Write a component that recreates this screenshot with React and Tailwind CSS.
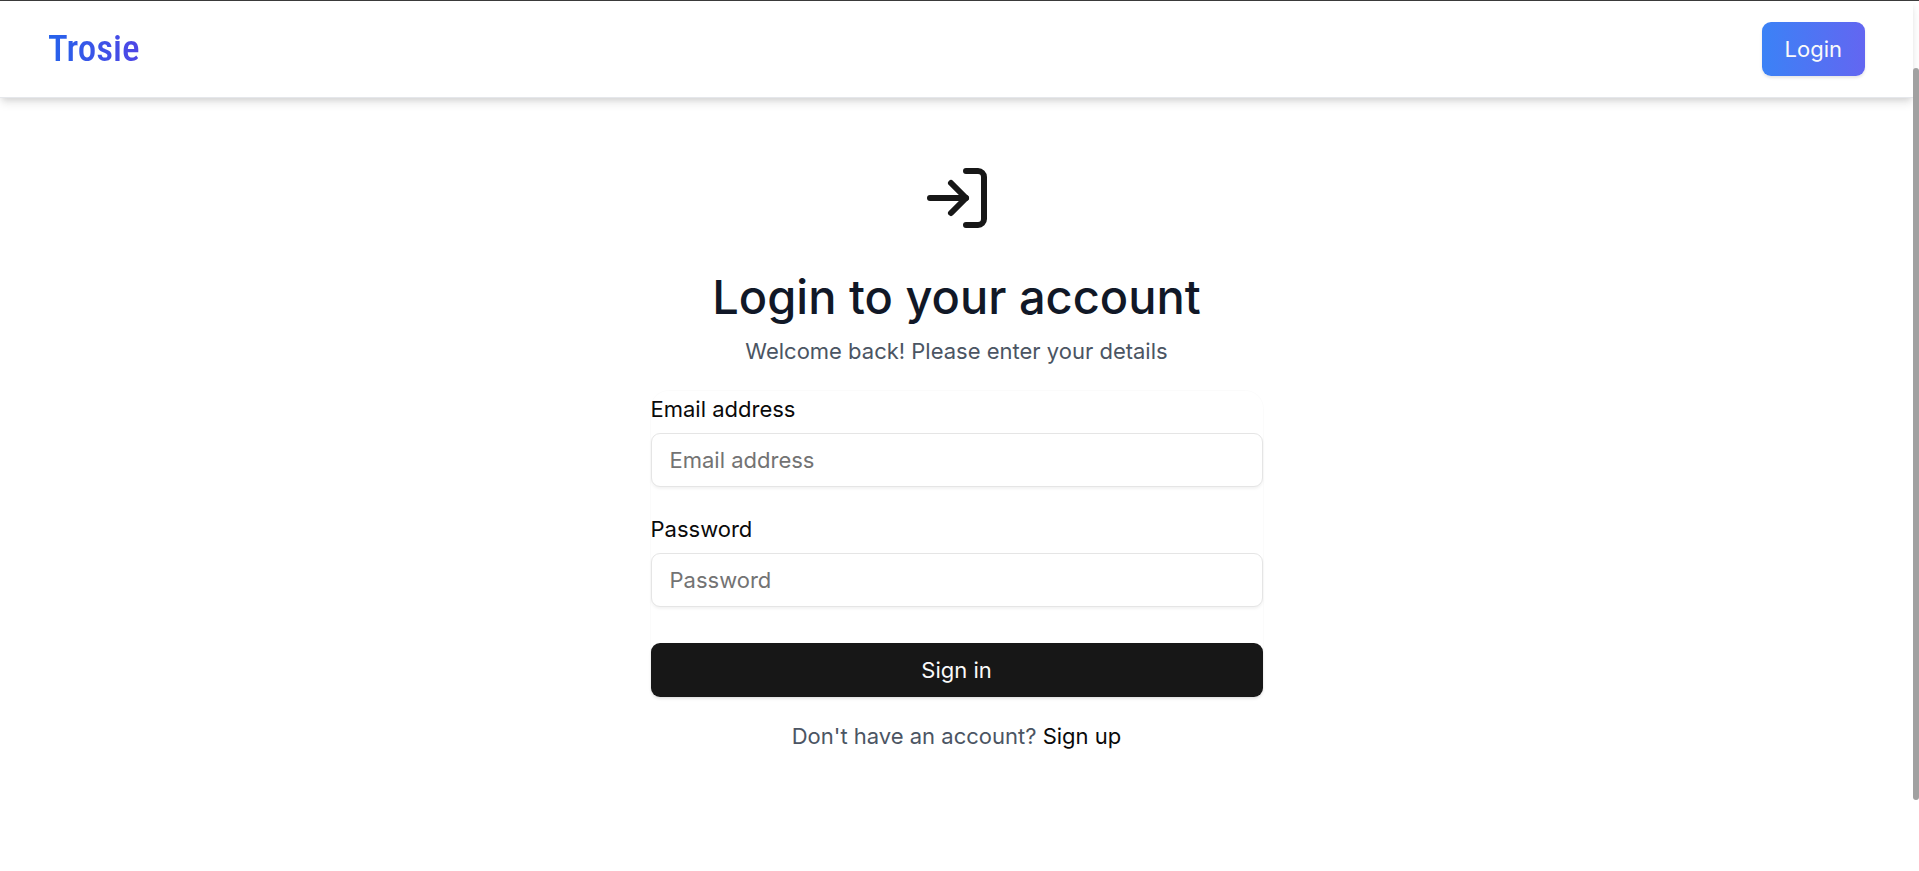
import { LogIn } from "lucide-react";

function Field({ id, label, type }) {
  return (
    <div className="flex flex-col gap-[10px]">
      <label htmlFor={id} className="text-[22px] leading-7 text-neutral-950">
        {label}
      </label>
      <input
        id={id}
        name={id}
        type={type}
        placeholder={label}
        className="h-[54px] w-full rounded-[9px] border border-[#e5e5e5] bg-white px-[18px] text-[22px] text-neutral-950 shadow-[0_2px_3px_rgba(0,0,0,0.05)] placeholder:text-[#737373]"
      />
    </div>
  );
}

function Header() {
  return (
    <header className="flex items-center justify-between border-b border-[#e5e7eb] bg-white px-12 py-[21px] shadow-[0_6px_9px_-1px_rgba(0,0,0,0.1),0_3px_6px_-2px_rgba(0,0,0,0.1)]">
      <a
        href="#home"
        className="bg-linear-[to_right,#2563eb,#4f46e5] bg-clip-text font-['Roboto_Condensed','Liberation_Sans_Narrow','Liberation_Sans',sans-serif] text-[37px] font-medium leading-[54px] text-transparent"
      >
        Trosie
      </a>
      <button
        type="button"
        className="h-[54px] rounded-[9px] bg-linear-[to_right,#3b82f6,#6366f1] px-[23px] text-[22px] text-neutral-50 shadow-[0_2px_3px_rgba(0,0,0,0.1)]"
      >
        Login
      </button>
    </header>
  );
}

export default function App() {
  return (
    <div className="flex min-h-screen border-t border-[#3c3c3c] bg-white font-['Inter',sans-serif] font-normal">
      <div className="flex min-w-0 flex-1 flex-col">
        <Header />
        <main className="mx-auto flex w-full max-w-[612px] flex-col items-center pt-16">
          <LogIn className="size-[72px] text-neutral-900" strokeWidth={2} aria-hidden="true" />
          <h1 className="mt-9 text-[47px] font-medium leading-[54px] text-[#111827]">
            Login to your account
          </h1>
          <p className="mt-[11px] text-[22px] leading-8 text-[#4b5563]">
            Welcome back! Please enter your details
          </p>
          <form className="mt-6 flex w-full flex-col gap-7 rounded-t-[18px] rounded-b-[9px] pt-1 shadow-[0_0_0_1px_rgba(0,0,0,0.015)]">
            <Field id="email" label="Email address" type="email" />
            <Field id="password" label="Password" type="password" />
            <button
              type="submit"
              className="mt-2 h-[54px] w-full rounded-[9px] bg-neutral-900 text-[22px] text-neutral-50 shadow-[0_2px_3px_rgba(0,0,0,0.1)]"
            >
              Sign in
            </button>
          </form>
          <p className="mt-[23px] text-[22px] leading-8 text-[#4b5563]">
            Don't have an account?{" "}
            <a href="#signup" className="text-neutral-950">
              Sign up
            </a>
          </p>
        </main>
      </div>
      <div aria-hidden="true" className="w-[6px] pt-[67px]">
        <div className="h-[732px] rounded-[3px] bg-[#a1a1a1]" />
      </div>
    </div>
  );
}
